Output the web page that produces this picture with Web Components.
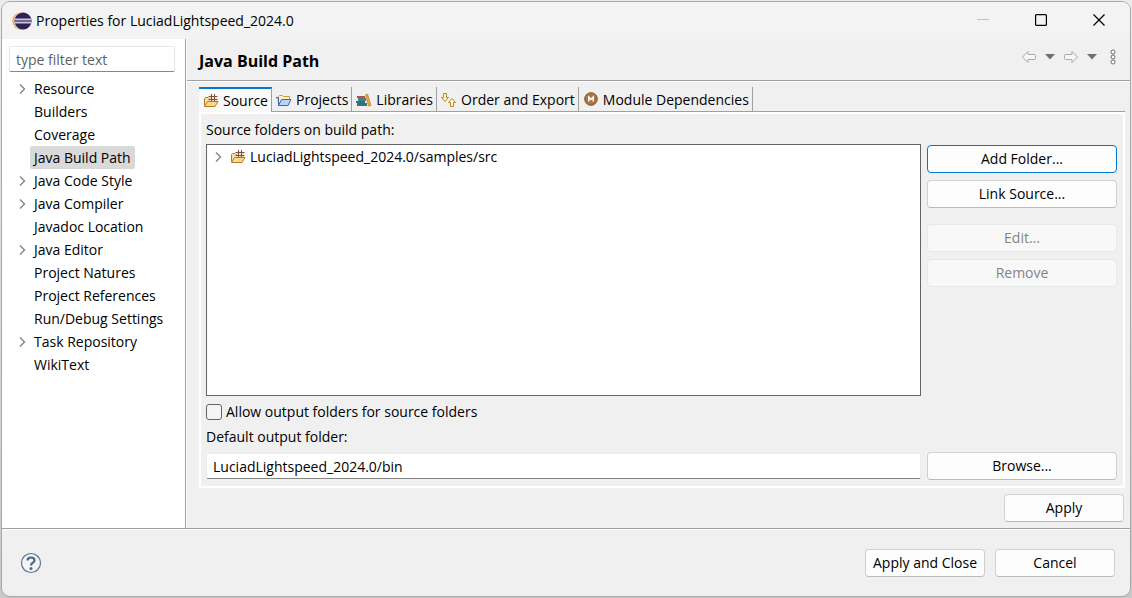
<!DOCTYPE html>
<html lang="en">
<head>
<meta charset="utf-8">
<title>Properties for LuciadLightspeed_2024.0</title>
<style>
  html, body { margin: 0; }
  body {
    min-height: 100vh;
    display: flex;
    background: linear-gradient(#ececec, #c8c8c8);
    font: 14px/20px "Open Sans", "Noto Sans", sans-serif;
    color: #000;
  }
  properties-dialog { flex: 1; }
</style>
</head>
<body>
<properties-dialog></properties-dialog>
<script>
const ICONS = {
  eclipse: `<svg width="20" height="20" viewBox="0 0 20 20"><circle cx="9.200" cy="10" r="8.800" fill="#f7941e"/><circle cx="10.400" cy="10" r="9" fill="#f1e4dc"/><circle cx="11" cy="10" r="8.600" fill="#2c2255"/><path d="M2.500 8.200h17M2.500 11.800h17" stroke="#c9c5dd" stroke-width="1.600"/><path d="M2.500 10h17" stroke="#8880b0" stroke-width="1.600"/></svg>`,
  package: `<svg width="16" height="16" viewBox="0 0 16 16"><path d="M1.500 12.500V5.500L2.500 4.500H5l1 1h7v3" fill="#f6dfa6" stroke="#b57a25"/><rect x="6.500" y="2.500" width="7" height="6" fill="#f0e2cf"/><path d="M8.500 1v7.500M11.500 1v7.500M5.500 3.500h9M5.500 6.500h9" stroke="#7d5238"/><path d="M1.500 13.500L4.500 8.500h10.500L12 13.500z" fill="#fbd98a" stroke="#b57a25" stroke-linejoin="round"/></svg>`,
  project: `<svg width="16" height="16" viewBox="0 0 16 16"><path d="M2.500 13V4.500L3.500 3.500h3l1 1h6v3" fill="#fdf0c4" stroke="#c59a45"/><path d="M0.500 6.500V5.500h2v8h9.500l3-6H5.500l-3 6" fill="#b8d4f6" stroke="#4666ae" stroke-linejoin="round"/></svg>`,
  library: `<svg width="16" height="16" viewBox="0 0 16 16"><rect x="1" y="4" width="8" height="2" fill="#b7503c"/><rect x="2" y="6" width="8" height="3" fill="#37868a"/><rect x="0" y="9" width="9" height="2" fill="#4c5f86"/><rect x="1" y="11" width="10" height="3" fill="#2f7c5c"/><path d="M9.500 3l2-1 3.500 11.500-2.500.500z" fill="#eda63e" stroke="#c97823" stroke-width=".7"/></svg>`,
  order: `<svg width="16" height="16" viewBox="0 0 16 16"><path d="M2.500 1.500h3v4h2L4 9.500.500 5.500h2z" fill="#fff6d5" stroke="#b98a22" stroke-linejoin="round"/><path d="M9.500 14.500h3v-4h2L11 6.500l-3.500 4h2z" fill="#fff6d5" stroke="#b98a22" stroke-linejoin="round"/></svg>`,
  module: `<svg width="16" height="16" viewBox="0 0 16 16"><circle cx="8" cy="7" r="6.300" fill="#a87543" stroke="#875420"/><path d="M5.800 9.500V5L8 7.300 10.200 5v4.500" fill="none" stroke="#fff" stroke-width="1.500"/></svg>`,
  back: `<svg width="16" height="14" viewBox="0 0 16 14"><path d="M1.500 7L7 1.500v3h6.500q1 0 1 1v3q0 1-1 1H7v3z" fill="#f6f6f6" stroke="#a9a9a9" stroke-linejoin="round"/></svg>`,
  forward: `<svg width="16" height="14" viewBox="0 0 16 14"><path d="M14.500 7L9 1.500v3H2.500q-1 0-1 1v3q0 1 1 1H9v3z" fill="#f6f6f6" stroke="#a9a9a9" stroke-linejoin="round"/></svg>`,
  drop: `<svg width="10" height="6" viewBox="0 0 10 6"><path d="M0 0h10L5 5.500z" fill="#707070"/></svg>`,
  dots: `<svg width="6" height="16" viewBox="0 0 6 16"><g fill="#fff" stroke="#6c6c6c"><circle cx="3" cy="3" r="2"/><circle cx="3" cy="8" r="2"/><circle cx="3" cy="13" r="2"/></g></svg>`,
  minimize: `<svg width="12" height="12" viewBox="0 0 12 12"><path d="M0 5.500h12" stroke="#c1c1c1"/></svg>`,
  maximize: `<svg width="12" height="12" viewBox="0 0 12 12"><rect x=".6" y=".6" width="10.800" height="10.800" rx="1" fill="none" stroke="#000" stroke-width="1.200"/></svg>`,
  close: `<svg width="12" height="12" viewBox="0 0 12 12"><path d="M.500.500l11 11M11.500.500l-11 11" stroke="#000" stroke-width="1.200"/></svg>`,
  chevron: `<svg width="8" height="12" viewBox="0 0 8 12"><path d="M2 1.500L6.500 6 2 10.500" fill="none" stroke="#858585" stroke-width="1.400"/></svg>`,
  help: `<svg width="22" height="22" viewBox="0 0 22 22"><circle cx="11" cy="11" r="9.500" fill="#f2f4f6" stroke="#5c7390" stroke-width="1.200"/><path d="M7.500 8.500Q7.600 5.500 11 5.500t3.500 2.800Q14.500 10 12.500 11 11 11.800 11 13.500" fill="none" stroke="#4f6587" stroke-width="2.200"/><circle cx="11" cy="16.500" r="1.500" fill="#4f6587"/></svg>`
};

function define(name, html, setup) {
  const template = document.createElement('template');
  template.innerHTML = html;
  customElements.define(name, class extends HTMLElement {
    constructor() {
      super();
      this.attachShadow({ mode: 'open' }).append(template.content.cloneNode(true));
    }
    connectedCallback() { if (setup) setup(this, this.shadowRoot); }
  });
}

define('ui-icon', `<style>:host{display:block;flex:none}svg{display:block}</style><span></span>`,
  (el, root) => { root.querySelector('span').innerHTML = ICONS[el.getAttribute('name')] || ''; });

define('push-button', `
<style>
  :host { display: block; }
  button {
    display: block; box-sizing: border-box; width: 100%; height: 28px; padding: 0 4px;
    border: 1px solid #d0d0d0; border-bottom-color: #bababa; border-radius: 4px;
    background: #fdfdfd; color: #000; font: inherit; white-space: nowrap;
  }
  button:disabled { background: #f8f8f8; border-color: #e8e8e8; color: #848484; }
  :host([primary]) button { border-color: #0078d4; }
</style>
<button type="button"><slot></slot></button>`,
  (el, root) => { root.querySelector('button').disabled = el.hasAttribute('disabled'); });

define('icon-button', `
<style>
  :host { display: block; }
  button { display: flex; align-items: center; justify-content: center; width: 100%; height: 100%; padding: 0; border: 0; background: none; }
</style>
<button type="button"><ui-icon></ui-icon></button>`,
  (el, root) => {
    root.querySelector('ui-icon').setAttribute('name', el.getAttribute('icon'));
    root.querySelector('button').setAttribute('aria-label', el.getAttribute('label'));
    root.querySelector('ui-icon').connectedCallback();
  });

define('tree-item', `
<style>
  :host { display: flex; align-items: center; height: 23px; }
  .twisty { width: 12px; flex: none; visibility: hidden; }
  :host([expandable]) .twisty { visibility: visible; }
  .label { display: flex; align-items: center; gap: 4px; padding: 0 4px; line-height: 23px; border-radius: 2px; white-space: nowrap; }
  :host([selected]) .label { background: #d9d9d9; }
</style>
<ui-icon class="twisty" name="chevron"></ui-icon>
<span class="label"><slot name="icon"></slot><slot></slot></span>`);

define('title-bar', `
<style>
  :host { display: flex; align-items: center; height: 37px; padding: 0 2px 0 10px; background: #f3f3f3; }
  h1 { flex: 1; margin: 0 0 0 4px; font: inherit; }
  icon-button { width: 58px; height: 36px; align-self: flex-start; }
</style>
<ui-icon name="eclipse"></ui-icon>
<h1><slot></slot></h1>
<icon-button icon="minimize" label="Minimize"></icon-button>
<icon-button icon="maximize" label="Maximize"></icon-button>
<icon-button icon="close" label="Close"></icon-button>`);

define('page-tree', `
<style>
  :host { display: block; box-sizing: border-box; padding: 7px 10px 7px 7px; background: #fff; border-right: 1px solid #a0a0a0; }
  input {
    display: block; box-sizing: border-box; width: 100%; height: 26px; padding: 0 6px; margin-bottom: 5px;
    border: 1px solid #e5e5e5; border-bottom-color: #868686; border-radius: 2px; font: inherit; background: #fff;
  }
  input::placeholder { color: #606060; opacity: 1; }
  nav { padding-left: 9px; }
</style>
<input type="text" placeholder="type filter text" aria-label="Filter">
<nav>
  <tree-item expandable>Resource</tree-item>
  <tree-item>Builders</tree-item>
  <tree-item>Coverage</tree-item>
  <tree-item selected>Java Build Path</tree-item>
  <tree-item expandable>Java Code Style</tree-item>
  <tree-item expandable>Java Compiler</tree-item>
  <tree-item>Javadoc Location</tree-item>
  <tree-item expandable>Java Editor</tree-item>
  <tree-item>Project Natures</tree-item>
  <tree-item>Project References</tree-item>
  <tree-item>Run/Debug Settings</tree-item>
  <tree-item expandable>Task Repository</tree-item>
  <tree-item>WikiText</tree-item>
</nav>`);

define('page-header', `
<style>
  :host { display: flex; align-items: center; height: 41px; padding: 0 7px 0 12px; border-bottom: 1px solid #a0a0a0; box-shadow: 0 1px #fff; }
  h2 { flex: 1; margin: 3px 0 0; font-size: 16px; line-height: 22px; font-weight: 700; }
  .tools { display: flex; align-items: center; height: 36px; align-self: flex-start; }
  icon-button { width: 21px; height: 20px; }
</style>
<h2><slot></slot></h2>
<div class="tools">
  <icon-button icon="back" label="Back"></icon-button>
  <icon-button icon="drop" label="Back history"></icon-button>
  <icon-button icon="forward" label="Forward"></icon-button>
  <icon-button icon="drop" label="Forward history"></icon-button>
  <icon-button icon="dots" label="View menu"></icon-button>
</div>`);

define('tab-item', `
<style>
  :host { display: block; }
  button {
    display: flex; align-items: center; gap: 4px; box-sizing: border-box; height: 25px; width: 100%; padding: 2px 3px 0 4px;
    border: 0; border-right: 1px solid #a0a0a0; border-bottom: 1px solid #a0a0a0; background: none; color: #000; font: inherit; white-space: nowrap;
  }
  :host([selected]) button { padding-top: 0; border-top: 2px solid #0078d4; border-bottom: 0; background: #f9f9f9; }
</style>
<button type="button" role="tab"><ui-icon></ui-icon><slot></slot></button>`,
  (el, root) => {
    const icon = root.querySelector('ui-icon');
    icon.setAttribute('name', el.getAttribute('icon'));
    icon.connectedCallback();
    root.querySelector('button').setAttribute('aria-selected', el.hasAttribute('selected'));
  });

define('tab-folder', `
<style>
  :host { display: flex; flex-direction: column; }
  .strip { display: flex; }
  .strip::after { content: ""; flex: 1; border-bottom: 1px solid #a0a0a0; }
  .panel { flex: 1; display: grid; border: 2px solid #fff; }
</style>
<div class="strip" role="tablist"><slot name="tab"></slot></div>
<div class="panel" role="tabpanel"><slot></slot></div>`);

define('source-page', `
<style>
  :host { display: grid; grid-template-columns: 1fr 190px; grid-template-rows: 19px 1fr 21px 20px 28px; gap: 5px 6px; padding: 6px 6px 6px 5px; }
  .wide { grid-column: 1 / -1; }
  .tree { box-sizing: border-box; border: 1px solid #646464; background: #fff; padding-left: 7px; }
  .buttons { display: flex; flex-direction: column; gap: 7px; padding-top: 1px; }
  .buttons .group { margin-top: 9px; }
  .check { display: flex; align-items: center; gap: 4px; }
  input[type=checkbox] { appearance: none; box-sizing: border-box; width: 16px; height: 16px; margin: 0; border: 1px solid #626262; border-radius: 3px; background: #f5f5f5; }
  input[type=text] { box-sizing: border-box; width: 100%; height: 26px; align-self: center; padding: 0 6px; border: 1px solid #ececec; border-bottom-color: #868686; border-radius: 2px; background: #fff; color: #000; font: inherit; }
</style>
<span class="wide">Source folders on build path:</span>
<div class="tree"><tree-item expandable><ui-icon slot="icon" name="package"></ui-icon>LuciadLightspeed_2024.0/samples/src</tree-item></div>
<div class="buttons">
  <push-button primary>Add Folder...</push-button>
  <push-button>Link Source...</push-button>
  <push-button class="group" disabled>Edit...</push-button>
  <push-button disabled>Remove</push-button>
</div>
<label class="wide check"><input type="checkbox">Allow output folders for source folders</label>
<label class="wide" for="output">Default output folder:</label>
<input type="text" id="output" value="LuciadLightspeed_2024.0/bin">
<push-button>Browse...</push-button>`);

define('properties-dialog', `
<style>
  :host { display: flex; flex-direction: column; box-sizing: border-box; margin: 1px; border: 1px solid #a8a8a8; border-radius: 9px; overflow: hidden; background: #f0f0f0; }
  .body { flex: 1; display: grid; grid-template-columns: 184px 1fr; }
  main { display: flex; flex-direction: column; min-width: 0; border-left: 1px solid #fff; }
  tab-folder { flex: 1; margin: 6px 5px 0 12px; }
  .apply { display: flex; justify-content: flex-end; padding: 6px 6px; }
  .apply push-button, footer push-button { width: 120px; }
  footer { display: flex; align-items: center; gap: 10px; height: 67px; padding: 0 15px 0 18px; border-top: 1px solid #a0a0a0; box-shadow: inset 0 1px #fff; }
  footer icon-button { width: 22px; height: 22px; margin-right: auto; }
</style>
<title-bar>Properties for LuciadLightspeed_2024.0</title-bar>
<div class="body">
  <page-tree></page-tree>
  <main>
    <page-header>Java Build Path</page-header>
    <tab-folder>
      <tab-item slot="tab" icon="package" selected>Source</tab-item>
      <tab-item slot="tab" icon="project">Projects</tab-item>
      <tab-item slot="tab" icon="library">Libraries</tab-item>
      <tab-item slot="tab" icon="order">Order and Export</tab-item>
      <tab-item slot="tab" icon="module">Module Dependencies</tab-item>
      <source-page></source-page>
    </tab-folder>
    <div class="apply"><push-button>Apply</push-button></div>
  </main>
</div>
<footer>
  <icon-button icon="help" label="Help"></icon-button>
  <push-button>Apply and Close</push-button>
  <push-button>Cancel</push-button>
</footer>`);
</script>
</body>
</html>
